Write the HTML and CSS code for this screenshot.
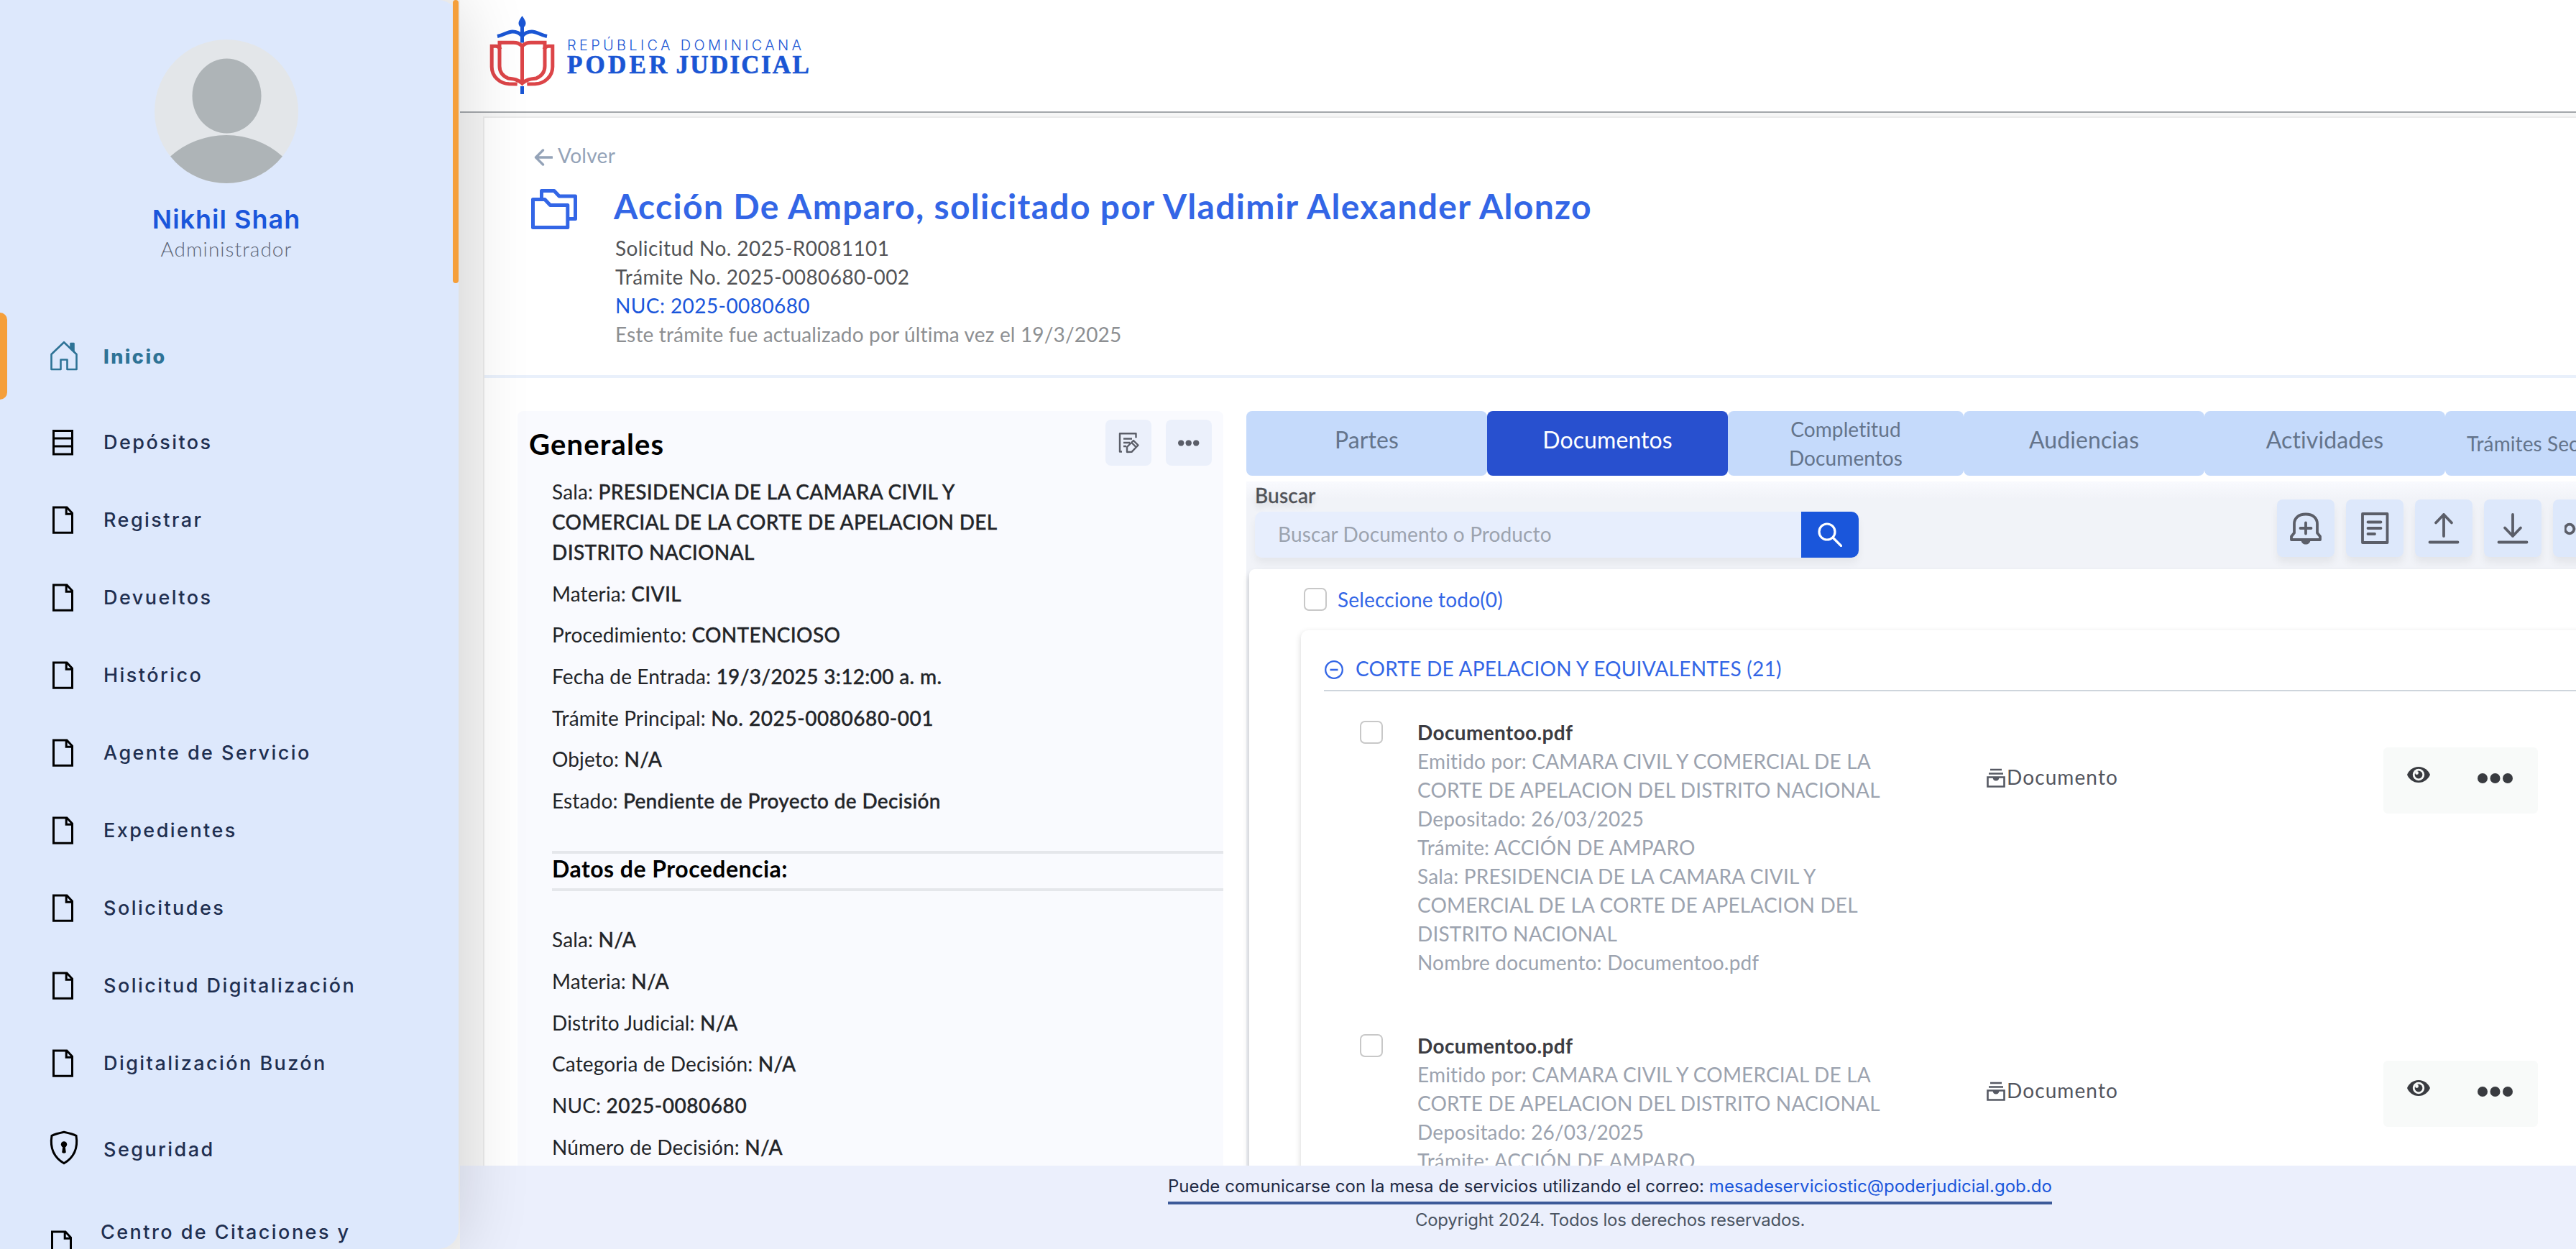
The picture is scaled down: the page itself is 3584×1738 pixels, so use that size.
FILE: index.html
```html
<!DOCTYPE html>
<html lang="es">
<head>
<meta charset="utf-8">
<title>Poder Judicial - Trámite</title>
<link rel="stylesheet" href="styles.css">
</head>
<body>
<svg class="defs" aria-hidden="true">
  <symbol id="i-doc" viewBox="0 0 40 48"><path d="M5.5 7H24l7.5 8v27.2h-26zM23.2 7v9.3h8.3"/></symbol>
  <symbol id="i-type" viewBox="0 0 26 28"><path d="M5 2h16M3 7.5h20M1.5 12.5h23v13h-23z" fill="none" stroke="#565963" stroke-width="2.6"/><path d="M8.5 13h9c-.3 3-2 4.500-4.500 4.500s-4.200-1.500-4.500-4.500z" fill="#565963"/></symbol>
  <symbol id="i-eye" viewBox="0 0 32 22"><path d="M16 0C24 0 29.500 5 32 11 29.500 17 24 22 16 22S2.500 17 0 11C2.500 5 8 0 16 0z" fill="#393b40"/><circle cx="16" cy="11" r="8.200" fill="#f8faf9"/><circle cx="16" cy="11" r="5.400" fill="#393b40"/><circle cx="13.500" cy="8.500" r="2.400" fill="#f8faf9"/></symbol>
  <symbol id="i-dots" viewBox="0 0 50 14"><circle cx="7" cy="7" r="7"/><circle cx="24.500" cy="7" r="7"/><circle cx="42" cy="7" r="7"/></symbol>
</svg>

<aside class="sidebar">
  <div class="profile">
    <svg class="avatar" viewBox="0 0 200 200"><clipPath id="round"><circle cx="100" cy="100" r="100"/></clipPath><g clip-path="url(#round)"><rect width="200" height="200" fill="#e3e6e9"/><ellipse cx="100.500" cy="78.500" rx="48" ry="52" fill="#aeb4b7"/><ellipse cx="100" cy="234" rx="110" ry="101" fill="#aeb4b7"/></g></svg>
    <div class="profile-name">Nikhil Shah</div>
    <div class="profile-role">Administrador</div>
  </div>
  <nav class="menu">
    <a class="item item-active"><i class="marker"></i><svg class="ico ico-home" viewBox="0 0 40 48"><path d="M20 4.200 37.500 21v21H24.500V28.500h-9V42H2.500V21z"/><path d="M29.500 6h4v11l-4-4z" fill="#2e7396"/></svg><span>Inicio</span></a>
    <a class="item"><svg class="ico" viewBox="0 0 40 48"><path d="M5.500 8.500h26v32.500h-26zM5.500 19h26M5.500 30h26"/></svg><span>Depósitos</span></a>
    <a class="item"><svg class="ico"><use href="#i-doc"/></svg><span>Registrar</span></a>
    <a class="item"><svg class="ico"><use href="#i-doc"/></svg><span>Devueltos</span></a>
    <a class="item"><svg class="ico"><use href="#i-doc"/></svg><span>Histórico</span></a>
    <a class="item"><svg class="ico"><use href="#i-doc"/></svg><span>Agente de Servicio</span></a>
    <a class="item"><svg class="ico"><use href="#i-doc"/></svg><span>Expedientes</span></a>
    <a class="item"><svg class="ico"><use href="#i-doc"/></svg><span>Solicitudes</span></a>
    <a class="item"><svg class="ico"><use href="#i-doc"/></svg><span>Solicitud Digitalización</span></a>
    <a class="item"><svg class="ico"><use href="#i-doc"/></svg><span>Digitalización Buzón</span></a>
    <a class="item item-tall"><svg class="ico" viewBox="0 0 40 48"><path d="M20 .3c5.500 1.200 11 2.300 17 5 2.500 16-1.500 29.500-17 38.500C4.500 34.800.500 21.300 3 5.300 9 2.600 14.500 1.500 20 .3z"/><circle cx="20" cy="17.500" r="4.200" fill="#000" stroke="none"/><path d="M18.500 19h3l1.300 9.500q-2.800 2.500-5.600 0z" fill="#000" stroke="none"/></svg><span>Seguridad</span></a>
    <a class="item item-wrap"><svg class="ico"><use href="#i-doc"/></svg><span>Centro de Citaciones y</span></a>
  </nav>
  <i class="thumb"></i>
</aside>

<main class="main">
  <header class="topbar">
    <svg class="crest" viewBox="0 0 110 130">
      <g fill="none" stroke="#1a56d4" stroke-width="5"><path d="M56.500 22V49.500M56.500 110v11"/><path d="M22 40.500c10-2 14-6.500 21-6.500 6 0 10 2 13.500 6 3.500-4 7.500-6 13.500-6 7 0 11 4.500 21 6.500"/></g>
      <path d="M56.500 12c2.500 4 5 7 5 10 0 4-2.500 6.500-5 6.500s-5-2.500-5-6.500c0-3 2.500-6 5-10z" fill="#1a56d4"/>
      <g fill="none" stroke="#dc4548" stroke-width="5"><path d="M56.500 106V54c-5-4-7-4.800-12-4.800H25V82c0 8 5 14 12 17 9 1 14 2 19.500 7 5.500-5 10.500-6 19.500-7 7-3 12-9 12-17V49.200H68.500c-5 0-7 .8-12 4.800"/><path d="M26 58.500c-1.500-3.500-4-4.300-6-4.300h-5.800V83c0 14 12 23.500 24 23.800 5 0 7.500 0 11.500.2M87 58.500c1.500-3.500 4-4.300 6-4.300h5.800V83c0 14-12 23.500-24 23.800-5 0-7.500 0-11.500.2"/></g>
    </svg>
    <div class="brand">
      <div class="brand-country">REPÚBLICA DOMINICANA</div>
      <div class="brand-name"><span class="brand-poder">PODER</span><span class="brand-judicial">JUDICIAL</span></div>
    </div>
  </header>

  <div class="stage">
    <section class="card">
      <div class="head">
        <a class="back"><svg width="26" height="24" viewBox="0 0 26 24"><path d="M25 12H3M12.500 2 2.500 12l10 10" fill="none" stroke="#94a3b8" stroke-width="3.400" stroke-linecap="round" stroke-linejoin="round"/></svg><span>Volver</span></a>
        <div class="title-row">
          <svg class="folder" viewBox="0 0 64 56"><g fill="none" stroke="#3366e6" stroke-width="5" stroke-linejoin="round"><path d="M2.500 14.500H19l7.500 8h24.300v31H2.500z"/><path d="M14.500 14V2.500H32l7 7.500h22.500v31.500H51"/></g></svg>
          <div>
            <h1>Acción De Amparo, solicitado por Vladimir Alexander Alonzo</h1>
            <div class="meta">
              <div class="meta-num">Solicitud No. 2025-R0081101</div>
              <div class="meta-num">Trámite No. 2025-0080680-002</div>
              <div class="meta-num meta-nuc">NUC: 2025-0080680</div>
              <div class="meta-date">Este trámite fue actualizado por última vez el 19/3/2025</div>
            </div>
          </div>
        </div>
      </div>

      <div class="columns">
        <section class="general">
          <div class="general-head">
            <h2>Generales</h2>
            <button class="sq"><svg width="30" height="30" viewBox="0 0 30 30" fill="none" stroke="#5b5e68" stroke-width="2.400" stroke-linejoin="round"><path d="M6 27.500H3V2.200h22.500v6"/><path d="M8 9.500h12M8 15h9M8 20h4"/><path d="M13 28v-7l9-9 6.500 6.500-9 9.300zM19 14.500l6 6"/></svg></button>
            <button class="sq"><svg width="30" height="9" viewBox="0 0 50 14" fill="#5b5e68"><use href="#i-dots" width="50" height="14"/></svg></button>
          </div>
          <div class="facts">
            <p>Sala: <b>PRESIDENCIA DE LA CAMARA CIVIL Y COMERCIAL DE LA CORTE DE APELACION DEL DISTRITO NACIONAL</b></p>
            <p>Materia: <b>CIVIL</b></p>
            <p>Procedimiento: <b>CONTENCIOSO</b></p>
            <p>Fecha de Entrada: <b>19/3/2025 3:12:00 a. m.</b></p>
            <p>Trámite Principal: <b class="num">No. 2025-0080680-001</b></p>
            <p>Objeto: <b>N/A</b></p>
            <p>Estado: <b>Pendiente de Proyecto de Decisión</b></p>
          </div>
          <h3>Datos de Procedencia:</h3>
          <div class="facts facts-origin">
            <p>Sala: <b>N/A</b></p>
            <p>Materia: <b>N/A</b></p>
            <p>Distrito Judicial: <b>N/A</b></p>
            <p>Categoria de Decisión: <b>N/A</b></p>
            <p>NUC: <b class="num">2025-0080680</b></p>
            <p>Número de Decisión: <b>N/A</b></p>
          </div>
        </section>

        <section class="work">
          <div class="tabs">
            <a class="tab">Partes</a>
            <a class="tab tab-active">Documentos</a>
            <a class="tab tab-two">Completitud Documentos</a>
            <a class="tab">Audiencias</a>
            <a class="tab">Actividades</a>
            <a class="tab tab-small">Trámites Secundarios</a>
          </div>
          <div class="docs">
            <div class="tools">
              <div class="search">
                <label>Buscar</label>
                <div class="search-row">
                  <div class="search-input">Buscar Documento o Producto</div>
                  <button class="search-btn"><svg width="34" height="34" viewBox="0 0 34 34" fill="none" stroke="#fff" stroke-width="3.200" stroke-linecap="round"><circle cx="13" cy="13" r="11"/><path d="m21.500 21.500 11 11"/></svg></button>
                </div>
              </div>
              <button class="tool"><svg viewBox="0 0 48 48"><path d="M4 40v-4.500l4-5V18C8 10 14 4.500 24 4.500S40 10 40 18v12.500l4 5V40z"/><path d="M24 16.500v15M16.500 24h15"/><path d="M17.500 40.500c.5 4 3 6 6.500 6s6-2 6.500-6z" fill="#5b5e68" stroke="none"/></svg></button>
              <button class="tool"><svg viewBox="0 0 48 48"><path d="M7 4h34.500v40H7z"/><path d="M14.500 15.500h18M14.500 24h18M14.500 32h9.500"/></svg></button>
              <button class="tool"><svg viewBox="0 0 48 48"><path d="M24 35V5M13 16.500 24 5l11 11.500M4.500 43.500h39"/></svg></button>
              <button class="tool"><svg viewBox="0 0 48 48"><path d="M24 5v30M13 23.500 24 35l11-11.500M4.500 43.500h39"/></svg></button>
              <button class="tool"><svg viewBox="0 0 48 48"><circle cx="7" cy="25" r="6.300"/><circle cx="24" cy="25" r="6.300"/><circle cx="41" cy="25" r="6.300"/></svg></button>
            </div>
            <div class="panel">
              <div class="select-all"><i class="check"></i><span>Seleccione todo(0)</span></div>
              <div class="group">
                <div class="group-head"><svg width="26" height="26" viewBox="0 0 26 26" fill="none" stroke="#3366e6" stroke-width="2.300"><circle cx="13" cy="13" r="11.800"/><path d="M7.500 13h11" stroke-width="2.600"/></svg><span>CORTE DE APELACION Y EQUIVALENTES (21)</span></div>
                <article class="doc">
                  <i class="check"></i>
                  <div class="doc-text">
                    <h4>Documentoo.pdf</h4>
                    <p>Emitido por: CAMARA CIVIL Y COMERCIAL DE LA CORTE DE APELACION DEL DISTRITO NACIONAL</p>
                    <p>Depositado: 26/03/2025</p>
                    <p>Trámite: ACCIÓN DE AMPARO</p>
                    <p>Sala: PRESIDENCIA DE LA CAMARA CIVIL Y COMERCIAL DE LA CORTE DE APELACION DEL DISTRITO NACIONAL</p>
                    <p>Nombre documento: Documentoo.pdf</p>
                  </div>
                  <div class="doc-type"><svg width="26" height="28"><use href="#i-type"/></svg><span>Documento</span></div>
                  <div class="doc-actions"><button class="act-eye"><svg width="32" height="22"><use href="#i-eye"/></svg></button><button class="act-more"><svg width="50" height="14" fill="#393b40"><use href="#i-dots"/></svg></button></div>
                </article>
                <article class="doc">
                  <i class="check"></i>
                  <div class="doc-text">
                    <h4>Documentoo.pdf</h4>
                    <p>Emitido por: CAMARA CIVIL Y COMERCIAL DE LA CORTE DE APELACION DEL DISTRITO NACIONAL</p>
                    <p>Depositado: 26/03/2025</p>
                    <p>Trámite: ACCIÓN DE AMPARO</p>
                  </div>
                  <div class="doc-type"><svg width="26" height="28"><use href="#i-type"/></svg><span>Documento</span></div>
                  <div class="doc-actions"><button class="act-eye"><svg width="32" height="22"><use href="#i-eye"/></svg></button><button class="act-more"><svg width="50" height="14" fill="#393b40"><use href="#i-dots"/></svg></button></div>
                </article>
              </div>
            </div>
          </div>
        </section>
      </div>
    </section>
  </div>

  <footer class="footer">
    <div class="footer-help">Puede comunicarse con la mesa de servicios utilizando el correo: <a>mesadeserviciostic@poderjudicial.gob.do</a></div>
    <div class="footer-copy">Copyright 2024. Todos los derechos reservados.</div>
  </footer>
</main>
</body>
</html>
```
FILE: styles.css
```css
* { box-sizing: border-box; }
html, body { height: 100%; margin: 0; overflow: hidden; }
body {
  display: flex;
  background: #f6f6f6;
  font-family: Lato, "Liberation Sans", sans-serif;
  font-size: 28px;
  line-height: 40px;
}
h1, h2, h3, h4, p { margin: 0; }
button { border: 0; padding: 0; display: flex; align-items: center; justify-content: center; }
.defs { position: absolute; width: 0; height: 0; }

/* Sidebar */
.sidebar {
  position: relative;
  z-index: 2;
  flex: none;
  width: 638px;
  height: 1738px;
  margin-right: 2px;
  padding-top: 55px;
  border-radius: 0 28px 28px 0;
  background: #dde8fc;
  box-shadow: 0 0 100px rgba(0, 0, 0, .16);
}
.thumb { position: absolute; top: 0; right: 0; width: 8px; height: 394px; border-radius: 4px; background: #f59f3a; }
.profile { width: 630px; height: 380px; display: flex; flex-direction: column; align-items: center; }
.avatar { width: 200px; height: 200px; flex: none; }
.profile-name { margin-top: 26px; font: 600 36px/48px Inter, sans-serif; letter-spacing: 1px; color: #1a56db; }
.profile-role { margin-top: -1px; line-height: 36px; font-weight: 300; letter-spacing: 1.04px; color: #5d6676; }
.menu { display: flex; flex-direction: column; height: 1303px; overflow: hidden; }
.item {
  flex: none;
  display: flex;
  align-items: center;
  gap: 35px;
  height: 108px;
  padding-left: 69px;
  font: 450 27px/36px Inter, sans-serif;
  letter-spacing: 2.45px;
  color: #1f2f50;
}
.item span { padding-top: 2px; }
.item-active { height: 121px; margin-bottom: 5px; padding-left: 0; font-weight: 800; color: #2e7396; }
.item-active .ico { margin-left: 24px; }
.marker { align-self: stretch; width: 10px; border-radius: 0 10px 10px 0; background: #f59f3a; }
.item-tall { height: 120px; margin-top: 6px; }
.item-wrap { height: 72px; margin-top: 36px; padding-left: 67px; gap: 33px; }
.item-wrap span { align-self: flex-start; }
.ico { width: 40px; height: 48px; flex: none; fill: none; stroke: #000; stroke-width: 3; overflow: visible; }
.ico-home { stroke: #2e7396; stroke-width: 2.6; stroke-linejoin: round; }

/* Main area */
.main { flex: none; width: 3200px; height: 1738px; display: flex; flex-direction: column; }
.topbar { flex: none; height: 157px; display: flex; align-items: flex-start; gap: 10px; padding: 10px 0 0 30px; background: #fff; border-bottom: 2px solid #a3a7ab; }
.crest { width: 110px; height: 130px; flex: none; }
.brand { margin-top: 39px; margin-left: -1px; color: #1a56d4; }
.brand-country { font: 300 20px/28px Inter, sans-serif; letter-spacing: 4.3px; }
.brand-name { display: flex; gap: 8px; margin-top: -4px; font: 700 35px/36px "Liberation Serif", serif; -webkit-text-stroke: .7px #1a56d4; }
.brand-poder { letter-spacing: 4.2px; }
.brand-judicial { letter-spacing: 2.3px; }

.stage { flex: 1; min-height: 0; overflow: hidden; padding: 5px 0 0 32px; }
.card { height: 2000px; background: #fff; border: 2px solid #ebebeb; }
.head { height: 362px; padding: 32px 0 0 65px; border-bottom: 4px solid #e9f0fb; }
.back { display: flex; align-items: center; gap: 7px; padding-left: 4px; color: #94a3b8; letter-spacing: .3px; }
.back svg { margin-top: 6px; }
.title-row { display: flex; gap: 51px; margin-top: 21px; }
.folder { width: 64px; height: 56px; margin-top: 6px; flex: none; }
h1 { font-size: 48px; line-height: 60px; letter-spacing: 1.32px; color: #3366e6; }
.meta { margin: 8px 0 0 2px; color: #525356; }
.meta-num { letter-spacing: .42px; }
.meta-nuc { color: #1a56db; }
.meta-date { letter-spacing: .16px; color: #8d8f92; }

.columns { display: flex; gap: 32px; padding: 46px 0 0 46px; }

/* Case summary */
.general { flex: none; width: 982px; height: 1400px; background: #f9fafe; border-radius: 8px; }
.general-head { display: flex; align-items: center; gap: 20px; padding: 12px 16px 0 16px; }
h2 { flex: 1; padding-top: 3px; font-size: 40px; line-height: 48px; letter-spacing: 1.15px; }
.sq { width: 64px; height: 64px; border-radius: 8px; background: #ebf0fb; }
.facts { width: 700px; margin-left: 48px; padding-top: 15px; color: #222428; letter-spacing: .14px; }
.facts p { width: 655px; line-height: 42px; margin-bottom: 15.7px; }
.facts b { font-weight: 500; letter-spacing: .34px; -webkit-text-stroke: .35px #222428; }
.facts .num { letter-spacing: .55px; }
h3 { margin: 49px 0 0 48px; padding: 1px 0 7px; border: solid #e5e7eb; border-width: 4px 0; font-size: 32px; line-height: 40px; letter-spacing: .48px; }
.facts-origin { padding-top: 46px; }

/* Documents workspace */
.work { flex: none; width: 2050px; }
.tabs { display: flex; }
.tab {
  flex: none;
  width: 335px;
  height: 90px;
  padding-bottom: 11px;
  display: flex;
  align-items: center;
  justify-content: center;
  border-radius: 8px;
  background: #c5dafb;
  font-size: 32px;
  letter-spacing: .1px;
  text-align: center;
  color: #64748b;
}
.tab-active { background: #2850cf; color: #fff; }
.tab-two { width: 328px; padding: 0 70px; font-size: 28px; }
.tab-small { justify-content: flex-start; padding: 0 0 0 30px; font-size: 28px; }
.docs { margin-top: 8px; padding-left: 4px; background: linear-gradient(#f9fafe, #f1f3f8 24px); }
.tools { display: flex; align-items: flex-start; gap: 16px; height: 122px; padding-left: 8px; }
.search { width: 1406px; flex: none; padding-top: 1px; }
.search label { display: block; line-height: 36px; font-weight: 500; letter-spacing: .2px; color: #505257; text-shadow: 0 6px 8px rgba(0, 0, 0, .12); -webkit-text-stroke: .3px #505257; }
.search-row { display: flex; width: 840px; margin-top: 5px; border-radius: 10px; box-shadow: 0 8px 12px rgba(0, 0, 0, .05); }
.search-input { width: 760px; height: 64px; padding-left: 32px; line-height: 62px; letter-spacing: .12px; border-radius: 10px 0 0 10px; background: #e7eefd; color: #9ca3af; }
.search-btn { width: 80px; height: 64px; border-radius: 0 10px 10px 0; background: #1a56db; }
.tool { flex: none; width: 80px; height: 80px; margin-top: 25px; border-radius: 8px; background: #dde8fb; box-shadow: 0 8px 12px rgba(0, 0, 0, .06); }
.tool svg { width: 48px; height: 48px; fill: none; stroke: #5b5e68; stroke-width: 3.8; stroke-linecap: round; stroke-linejoin: round; }
.panel { height: 1200px; padding: 26px 0 0 72px; border-radius: 8px; background: #fff; box-shadow: 0 6px 9px rgba(0, 0, 0, .22); }
.check { flex: none; display: block; width: 32px; height: 32px; border: 2px solid #c8c8c8; border-radius: 7px; background: #fff; }
.select-all { display: flex; gap: 15px; height: 32px; padding-left: 4px; line-height: 32px; letter-spacing: .19px; color: #3366e6; }
.group { height: 1100px; margin-top: 27px; padding: 33px 0 0 32px; border-radius: 10px 0 0 0; box-shadow: 0 3px 8px rgba(0, 0, 0, .17); }
.group-head { display: flex; align-items: center; gap: 17px; padding-bottom: 10px; border-bottom: 2px solid #ced5dc; letter-spacing: .25px; color: #3366e6; }
.group-head svg { margin: 3px 0 0 1px; }
.doc { display: grid; grid-template-columns: 80px 792px 552px 215px; align-items: start; margin: 36px 0 76px 50px; }
.doc .check { margin-top: 5px; }
.doc-text { width: 665px; padding-top: 1px; margin-bottom: -1px; letter-spacing: .18px; color: #9ca3af; }
h4 { font-size: 28px; line-height: 40px; letter-spacing: .36px; color: #3b3c42; }
.doc + .doc { margin-top: 0; }
.doc-type { display: flex; align-items: center; gap: 2px; margin-top: 63px; letter-spacing: 1.1px; color: #52555e; }
.doc-type svg { margin-top: 3px; }
.doc-actions { display: flex; margin-top: 42px; height: 92px; border-radius: 6px; background: #f8faf9; }
.doc-actions button { background: none; height: 92px; }
.act-eye { width: 100px; padding: 0 2px 17px 0; }
.act-more { width: 115px; padding: 0 3px 6px 0; }

/* Footer */
.footer { flex: none; height: 116px; display: flex; flex-direction: column; align-items: center; padding-top: 11px; background: #ebeffc; font: 400 24px/36px Inter, sans-serif; color: #1f2a44; }
.footer-help { padding-bottom: 3px; border-bottom: 4px solid #3c5a99; letter-spacing: .04px; }
.footer-help a { color: #1a56db; }
.footer-copy { margin-top: 4px; letter-spacing: -.26px; color: #4b5563; }
```
